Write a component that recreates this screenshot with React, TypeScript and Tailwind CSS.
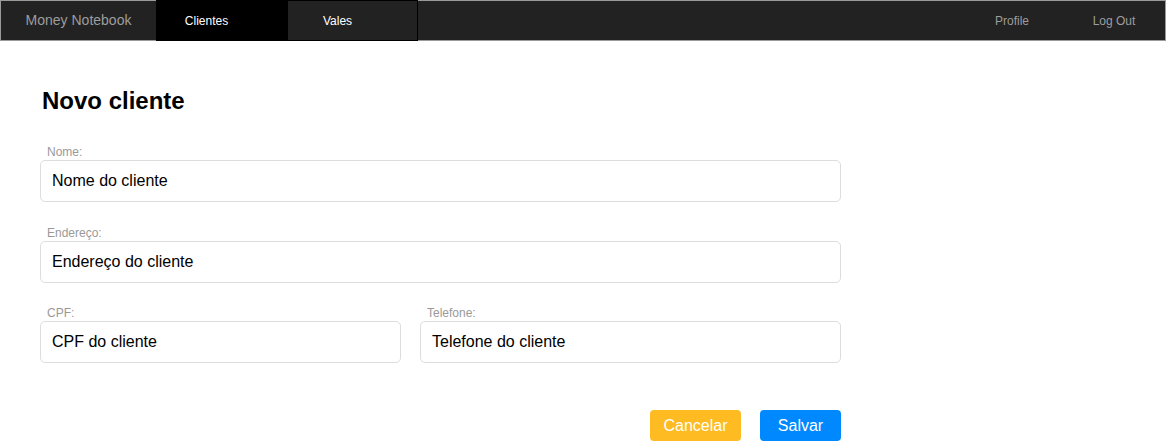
import React from 'react';

/** Top navigation bar. */
function NavBar() {
    return (
        <nav className="flex h-[41px] items-stretch border border-[#9a9a9a] bg-[#222222] text-[12px]">
            <div className="flex w-[155px] items-center justify-center text-[14px] text-[#9d9d9d]">
                Money Notebook
            </div>
            <div className="-my-px flex h-[41px] w-[131px] items-center justify-center bg-black pr-[30px] text-white">
                Clientes
            </div>
            <div className="-my-px flex h-[41px] w-[131px] items-center justify-center border border-black bg-[#222222] pr-[30px] text-white">
                Vales
            </div>
            <div className="ml-auto flex">
                <div className="flex w-[102px] items-center justify-center text-[#9d9d9d]">Profile</div>
                <div className="flex w-[102px] items-center justify-center text-[#9d9d9d]">Log Out</div>
            </div>
        </nav>
    );
}

/** Labeled text field. */
function Field({ label, placeholder, className = '' }: { label: string; placeholder: string; className?: string }) {
    return (
        <div className={`flex flex-col ${className}`}>
            <label className="mb-[1px] pl-[7px] text-[12px] leading-[14px] text-[#999999]">{label}</label>
            <div className="flex h-[42px] items-center rounded-[5px] border border-[#dddddd] px-[11px] text-[16px] text-black">
                {placeholder}
            </div>
        </div>
    );
}

export default function App() {
    return (
        <div className="min-h-[441px] bg-white" style={{ fontFamily: '"Liberation Sans", Arial, sans-serif' }}>
            <NavBar />
            <main className="w-[841px] pl-[40px] pt-[46px]">
                <h1 className="pl-[2px] text-[24px] font-bold leading-[28px] text-black">Novo cliente</h1>
                <form className="mt-[30px] flex flex-col gap-[24px]">
                    <Field label="Nome:" placeholder="Nome do cliente" />
                    <Field label="Endereço:" placeholder="Endereço do cliente" />
                    <div className="-mt-px flex gap-[19px]">
                        <Field label="CPF:" placeholder="CPF do cliente" className="w-[361px]" />
                        <Field label="Telefone:" placeholder="Telefone do cliente" className="flex-1" />
                    </div>
                    <div className="mt-[23px] flex justify-end gap-[19px]">
                        <button type="button" className="h-[31px] w-[91px] rounded-[4px] bg-[#ffbb22] text-[16px] text-white">
                            Cancelar
                        </button>
                        <button type="button" className="h-[31px] w-[81px] rounded-[4px] bg-[#0088ff] text-[16px] text-white">
                            Salvar
                        </button>
                    </div>
                </form>
            </main>
        </div>
    );
}
